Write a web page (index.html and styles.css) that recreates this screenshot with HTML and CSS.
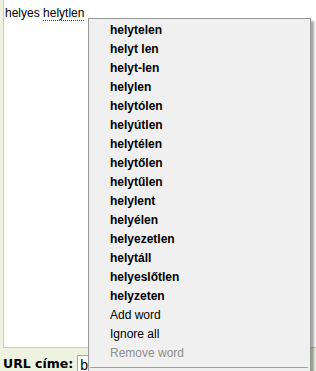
FILE: index.html
```html
<!DOCTYPE html>
<html lang="hu">
<head>
    <meta charset="UTF-8">
    <meta name="viewport" content="width=device-width, initial-scale=1.0">
    <title>Helyesírás</title>
    <link rel="stylesheet" href="styles.css">
</head>
<body>
    <div class="editor">
        <p class="text">helyes <span class="misspelled">helytlen</span></p>
    </div>
    <div class="url-row">
        <label for="url">URL címe:</label>
        <input type="text" id="url" value="b">
    </div>

    <ul class="menu">
        <li class="suggestion">helytelen</li>
        <li class="suggestion">helyt len</li>
        <li class="suggestion">helyt-len</li>
        <li class="suggestion">helylen</li>
        <li class="suggestion">helytólen</li>
        <li class="suggestion">helyútlen</li>
        <li class="suggestion">helytélen</li>
        <li class="suggestion">helytőlen</li>
        <li class="suggestion">helytűlen</li>
        <li class="suggestion">helylent</li>
        <li class="suggestion">helyélen</li>
        <li class="suggestion">helyezetlen</li>
        <li class="suggestion">helytáll</li>
        <li class="suggestion">helyeslőtlen</li>
        <li class="suggestion">helyzeten</li>
        <li>Add word</li>
        <li>Ignore all</li>
        <li class="disabled">Remove word</li>
        <li class="separator"></li>
    </ul>
</body>
</html>
```

FILE: styles.css
```css
body {
    margin: 0;
    background-color: #eef3e1;
    font-family: 'Liberation Sans', Arial, sans-serif;
}
.editor {
    margin: -1px 0 0 3px;
    height: 349px;
    background-color: #fff;
    border: 1px solid #c8c8c8;
    border-right: none;
    box-sizing: border-box;
}
.text {
    margin: 0;
    padding: 6px 0 0 1px;
    font-size: 12px;
    color: #000;
}
.misspelled {
    border-bottom: 1px dotted #e00000;
}
.url-row {
    display: flex;
    align-items: flex-start;
    padding: 6px 0 0 3px;
}
.url-row label {
    font-family: 'DejaVu Sans', Verdana, sans-serif;
    font-weight: bold;
    font-size: 12.5px;
    color: #000;
    line-height: 15px;
    margin-right: 4px;
    padding-top: 2px;
}
.url-row input {
    margin: 1px 0 0 0;
    padding: 0 0 0 2px;
    width: 60px;
    height: 18px;
    border: 1px solid #a8a8a8;
    font-family: 'Liberation Sans', Arial, sans-serif;
    font-size: 14px;
    color: #000;
}
.menu {
    position: absolute;
    left: 88px;
    top: 18px;
    width: 223px;
    box-sizing: border-box;
    margin: 0;
    padding: 2px 0 5px 0;
    list-style: none;
    background-color: #f0f0f0;
    border: 1px solid #979797;
    box-shadow: 3px 3px 2px rgba(0, 0, 0, 0.35);
}
.menu li {
    height: 19px;
    line-height: 19px;
    padding-left: 21px;
    font-size: 12px;
    color: #000;
}
.menu .suggestion {
    font-weight: bold;
}
.menu .disabled {
    color: #8e8e8e;
}
.menu .separator {
    height: 0;
    margin: 4px 2px 0 1px;
    padding: 0;
    border-top: 1px solid #a0a0a0;
}
```
